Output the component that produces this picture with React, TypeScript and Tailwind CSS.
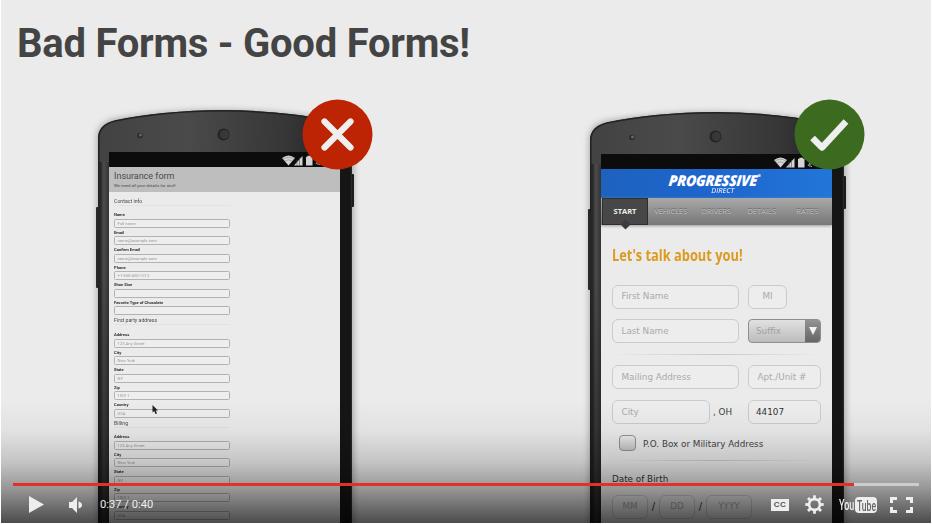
import React from "react";

type Tone = "left" | "right";

function PhoneShell({ id }: { id: Tone }) {
  return (
    <svg className="absolute left-0 top-0" width="272" height="440" viewBox="0 0 272 440" aria-hidden="true">
      <defs>
        <linearGradient id={id + "-body"} x1="0" y1="0" x2="1" y2="0.05">
          <stop offset="0" stopColor="#424242" />
          <stop offset="0.35" stopColor="#4a4a4a" />
          <stop offset="0.75" stopColor="#363636" />
          <stop offset="1" stopColor="#1c1c1c" />
        </linearGradient>
        <linearGradient id={id + "-side"} x1="0" y1="0" x2="1" y2="0">
          <stop offset="0" stopColor="#1d1d1d" />
          <stop offset="0.45" stopColor="#4c4c4c" />
          <stop offset="1" stopColor="#333" />
        </linearGradient>
        <linearGradient id={id + "-fade"} x1="0" y1="0" x2="0" y2="1">
          <stop offset="0" stopColor="#111" stopOpacity="0" />
          <stop offset="0.3" stopColor="#111" stopOpacity="0" />
          <stop offset="0.9" stopColor="#111" stopOpacity="0.9" />
        </linearGradient>
        <filter id={id + "-glow"} x="-10%" y="-10%" width="120%" height="120%">
          <feGaussianBlur stdDeviation="3.2" />
        </filter>
      </defs>
      <path d="M7 440V38Q7 23 24 19Q130 1 240 19Q264 23 264 38V440Z" fill="#777" opacity="0.55" filter={"url(#" + id + "-glow)"} />
      <rect x="6" y="107" width="4" height="81" rx="1" fill="#292929" />
      <rect x="260" y="74" width="4" height="33" rx="1" fill="#1c1c1c" />
      <path d="M8 440V38Q8 24.500 25 20.500Q72 10.500 133 10Q194 10.500 241 20.500Q262 24 262 38V440Z" fill={"url(#" + id + "-body)"} />
      <path d="M8.800 440V38Q9 25 25 21Q72 11.200 133 10.800Q194 11.200 241 21" fill="none" stroke="#222" strokeWidth="1.500" />
      <rect x="9.500" y="62" width="9.500" height="378" fill={"url(#" + id + "-side)"} />
      <rect x="250" y="52" width="12" height="388" fill="#151515" />
      <rect x="8" y="60" width="11" height="380" fill={"url(#" + id + "-fade)"} opacity="0.6" />
      <path d="M261.300 60V440" stroke="#2f2f2f" strokeWidth="1" />
      <circle cx="50" cy="35.500" r="2.800" fill="#2b2b2b" />
      <circle cx="50.500" cy="35" r="1.500" fill="#666" />
      <circle cx="133.500" cy="34.500" r="6" fill="#242424" />
      <circle cx="134.300" cy="34.500" r="4.500" fill="#383838" />
    </svg>
  );
}

function StatusIcons() {
  return (
    <svg width="42" height="11" viewBox="0 0 42 11" fill="#d4d4d4" aria-hidden="true">
      <path d="M0 3Q6.500 -2 13 3L6.500 10.500Z" />
      <path d="M1.200 4Q6.500 0.500 11.800 4M3 6Q6.500 3.500 10 6" fill="none" stroke="#777" strokeWidth="0.500" />
      <path d="M12 10.500L20.500 1V10.500Z" />
      <path d="M15 5V11M17.500 3V11" stroke="#555" strokeWidth="0.600" />
      <path d="M24 1.800H25.500V0.800H29V1.800H30.500V10.500H24Z" />
      <path d="M34 9L36 6V10M37.500 10V9" stroke="#aaa" fill="none" />
    </svg>
  );
}

function Phone({ id, className, children, badge }: { id: Tone; className: string; children: React.ReactNode; badge: React.ReactNode }) {
  return (
    <section className={"relative h-[440px] w-[272px] shrink-0 pl-[19px] pt-[52px] " + className}>
      <PhoneShell id={id} />
      <div className="relative h-[388px] w-[231px] overflow-hidden bg-[#ebebeb]">
        <div className="flex h-[15px] items-center bg-[#0c0c0c] pl-[173px] pt-px">
          <StatusIcons />
        </div>
        {children}
      </div>
      {badge}
    </section>
  );
}

const sections: { title: string; head: string; fields: [string, string][] }[] = [
  {
    title: "Contact info",
    head: "h-[18.200px] pt-[4.500px]",
    fields: [
      ["Name", "Full name"],
      ["Email", "name@example.com"],
      ["Confirm Email", "name@example.com"],
      ["Phone", "+1-650-450-1212"],
      ["Shoe Size", ""],
      ["Favorite Type of Chocolate", ""],
    ],
  },
  {
    title: "First party address",
    head: "h-[14.600px] pt-[1px]",
    fields: [
      ["Address", "123 Any Street"],
      ["City", "New York"],
      ["State", "NY"],
      ["Zip", "10011"],
      ["Country", "USA"],
    ],
  },
  {
    title: "Billing",
    head: "h-[14.600px] pt-[1px]",
    fields: [
      ["Address", "123 Any Street"],
      ["City", "New York"],
      ["State", "NY"],
      ["Zip", "10011"],
      ["Country", "USA"],
    ],
  },
];

function InsuranceForm() {
  return (
    <div className="font-[Roboto,sans-serif]">
      <header className="h-[25.300px] bg-[#bebebe] pl-[5px] pt-[3.500px] text-[#4a4a4a]">
        <h2 className="font-['Roboto',sans-serif] text-[9px] leading-[11px] tracking-[-0.020px]">Insurance form</h2>
        <p className="text-[4.300px] leading-[8px]">We need all your details for stuff</p>
      </header>
      <div className="w-[121px] pl-[5px] blur-[0.35px]">
        {sections.map((s) => (
          <div key={s.title}>
            <div className={s.head}>
              <h3 className="border-b border-[#e2e2e2] text-[5.200px] leading-[8px] text-[#4a4a4a]">{s.title}</h3>
            </div>
            {s.fields.map(([label, hint]) => (
              <div key={label} className="flex h-[17.500px] flex-col">
                <span className="h-[8.500px] whitespace-nowrap text-[4.100px] font-bold leading-[9.500px] text-[#303030]">{label}</span>
                <span className="h-[9px] rounded-[1.500px] border border-[#b2b2b2] bg-[#eeeeee] pl-[2.500px] text-[4.200px] leading-[7px] text-[#999]">{hint}</span>
              </div>
            ))}
          </div>
        ))}
      </div>
    </div>
  );
}

function Field({ className, children }: { className: string; children: React.ReactNode }) {
  return (
    <span className={"flex h-[24px] shrink-0 items-center rounded-[6px] border border-[#cbcbcb] bg-[#ededed] pt-px text-[#aaaaaa] " + className}>
      {children}
    </span>
  );
}

function Divider() {
  return <div className="h-px w-[208px] bg-linear-to-r from-transparent via-[#c8c8c8] to-transparent" />;
}

function ProgressiveForm() {
  return (
    <div className="font-['DejaVu_Sans',Verdana,sans-serif] text-[8.800px]">
      <header className="flex h-[29px] flex-col items-center bg-linear-to-r from-[#1d62bd] via-[#1e66cf] to-[#2276d8] pr-1 pt-[4px] text-white">
        <div className="flex scale-x-[0.94] -skew-x-6 items-start whitespace-nowrap font-['Open_Sans',sans-serif] text-[15px] font-extrabold italic leading-[15px] tracking-[-0.400px]">
          PROGRESSIVE<span className="text-[4px] leading-[5px]">®</span>
        </div>
        <div className="scale-x-[0.92] pl-[18px] font-['Open_Sans',sans-serif] text-[8px] italic leading-[4px]">DIRECT</div>
      </header>
      <nav className="flex h-[27px] items-stretch bg-linear-to-b from-[#a9a9a9] to-[#777] font-['Open_Sans',sans-serif] text-[7.500px] text-[#bebebe] shadow-[0_1px_3px_#999]">
        <div className="relative ml-px flex w-[46px] items-center justify-center border border-[#2e2e2e] bg-[#474747] font-bold text-[#eeeeee]">
          START
          <span className="absolute -bottom-[4px] left-[19px] size-[7px] rotate-45 bg-[#3b3b3b]" />
        </div>
        {["VEHICLES", "DRIVERS", "DETAILS", "RATES"].map((t) => (
          <span key={t} className="flex w-[45.500px] items-center justify-center [text-shadow:0_-1px_0_#696969]">{t}</span>
        ))}
      </nav>
      <div className="pl-[11px] pt-[19px]">
        <h2 className="h-[22px] w-[200px] origin-left scale-x-[0.802] whitespace-nowrap font-['Open_Sans',sans-serif] text-[16px] font-bold leading-[22px] text-[#dc9a20]">Let's talk about you!</h2>
        <div className="mt-[18.500px] flex gap-[9px]">
          <Field className="w-[127px] pl-[8.500px]">First Name</Field>
          <Field className="w-[39px] justify-center">MI</Field>
        </div>
        <div className="mt-[10.500px] flex gap-[9px]">
          <Field className="w-[127px] pl-[8.500px]">Last Name</Field>
          <span className="flex h-[24px] w-[73px] items-center overflow-hidden rounded-[4px] border border-[#8e8e8e] bg-linear-to-b from-[#e1e1e1] to-[#bcbcbc] text-[#a0a0a0]">
            <span className="grow pl-[7px] pt-px">Suffix</span>
            <span className="flex h-full w-[15px] items-center justify-center bg-linear-to-b from-[#929292] to-[#666]">
              <svg width="8" height="8" viewBox="0 0 8 8" aria-hidden="true"><path d="M0 0H8L4 8Z" fill="#f2f2f2" /></svg>
            </span>
          </span>
        </div>
        <div className="pt-[10.500px]"><Divider /></div>
        <div className="mt-[10.500px] flex gap-[9px]">
          <Field className="w-[127px] pl-[8.500px]">Mailing Address</Field>
          <Field className="w-[73px] pl-[8.500px]">Apt./Unit #</Field>
        </div>
        <div className="mt-[11px] flex items-center">
          <Field className="w-[98px] pl-[8.500px]">City</Field>
          <span className="w-[38px] pl-[3px] pt-px text-[#3f3f3f]">, OH</span>
          <Field className="w-[73px] pl-[7px]"><span className="text-[#333]">44107</span></Field>
        </div>
        <div className="mt-[11px] flex h-[16px] items-center gap-[7px] pl-[7px] text-[#444]">
          <span className="h-[16px] w-[17px] rounded-[4px] border border-[#929292] bg-linear-to-b from-[#ededed] to-[#c6c6c6]" />
          <span className="whitespace-nowrap pt-[3px]">P.O. Box or Military Address</span>
        </div>
        <div className="pt-[9px]"><Divider /></div>
        <p className="mt-[11px] h-[14px] leading-[14px] text-[#333]">Date of Birth</p>
        <div className="mt-[8.500px] flex items-center text-[#333]">
          <Field className="w-[36px] justify-center">MM</Field>
          <span className="w-[11px] text-center text-[10px]">/</span>
          <Field className="w-[36px] justify-center">DD</Field>
          <span className="w-[11px] text-center text-[10px]">/</span>
          <Field className="w-[46px] justify-center">YYYY</Field>
        </div>
      </div>
    </div>
  );
}

function Controls() {
  return (
    <footer className="absolute inset-x-0 bottom-0 flex h-[123px] flex-col justify-end bg-[linear-gradient(to_bottom,rgba(0,0,0,0)_0%,rgba(0,0,0,0.04)_25%,rgba(0,0,0,0.16)_50%,rgba(0,0,0,0.36)_72%,rgba(0,0,0,0.68)_100%)] px-3 text-[#eeeeee]">
      <div className="h-[3px] w-[906px] bg-[#cccccc]">
        <div className="h-full w-[841px] bg-[#e0322b]" />
      </div>
      <div className="flex h-[37px] items-center pl-4 pr-[6px]">
        <svg width="15" height="17" viewBox="0 0 15 17" fill="currentColor" aria-label="Play"><path d="M0 0L15 8.500L0 17Z" /></svg>
        <svg className="ml-[24.500px]" width="14" height="16" viewBox="0 0 14 16" fill="currentColor" aria-label="Volume"><path d="M0 5H3L8 0V16L3 11H0ZM9.500 4.500Q13 5.500 13 8T9.500 11.500Z" /></svg>
        <span className="ml-[17.500px] w-[60px] whitespace-nowrap pt-px font-[Roboto,sans-serif] text-[11.200px]">0:37 / 0:40</span>
        <span className="ml-auto flex h-[12px] w-[18px] items-center justify-center bg-[#eeeeee] font-['Liberation_Sans',sans-serif] text-[8px] font-bold tracking-[0.500px] text-[#555]">CC</span>
        <svg className="ml-[16px]" width="19" height="19" viewBox="-9.500 -9.500 19 19" aria-label="Settings">
          <g fill="none" stroke="#eee">
            {[0, 45, 90, 135, 180, 225, 270, 315].map((a) => <path key={a} d="M0 -5V-9.200" strokeWidth="2.800" transform={`rotate(${a})`} />)}
            <circle r="5.400" strokeWidth="2.600" />
          </g>
        </svg>
        <div className="ml-[15px] flex w-[38px] items-center font-['Roboto',sans-serif]">
          <span className="h-[18px] w-[16px] shrink-0 leading-[18px]"><span className="inline-block origin-left scale-x-[0.600] whitespace-nowrap text-[15px] font-medium">You</span></span>
          <span className="h-[16px] w-[22px] shrink-0 rounded-[4px] bg-[#eeeeee] pl-[2px] leading-[17px] text-[#666]"><span className="inline-block origin-left scale-x-[0.570] text-[15px] font-medium">Tube</span></span>
        </div>
        <svg className="ml-[13px]" width="23" height="16" viewBox="0 0 23 16" fill="none" stroke="currentColor" strokeWidth="3" aria-label="Full screen"><path d="M1.500 6V1.500H7M16 1.500H21.500V6M21.500 10V14.500H16M7 14.500H1.500V10" /></svg>
      </div>
    </footer>
  );
}

export default function App() {
  return (
    <div className="h-[524px] w-[932px] bg-white pl-px">
      <main className="relative flex h-[523px] w-[930px] flex-col overflow-hidden bg-[#ebebeb]">
        <h1 className="h-[100px] shrink-0 whitespace-nowrap pl-[16px] pt-[20px] font-[Roboto,sans-serif] text-[40px] font-bold leading-[48px] tracking-[-0.250px] text-[#444]">Bad Forms - Good Forms!</h1>
        <div className="flex gap-[220px] pl-[89px]">
          <Phone
            id="left"
            className=""
            badge={
              <svg className="absolute left-[212px] top-[-1px]" width="71" height="71" viewBox="0 0 71 71" aria-label="Bad">
                <circle cx="35.500" cy="35.500" r="35" fill="#bd2404" />
                <path d="M22.500 22.500L48.500 48.500M48.500 22.500L22.500 48.500" stroke="#efefef" strokeWidth="6.200" strokeLinecap="round" />
              </svg>
            }
          >
            <InsuranceForm />
          </Phone>
          <Phone
            id="right"
            className="top-[2px]"
            badge={
              <svg className="absolute left-[212px] top-[-3px]" width="71" height="71" viewBox="0 0 71 71" aria-label="Good">
                <circle cx="35.500" cy="35.500" r="35" fill="#3c6a1e" />
                <path d="M18.500 39L28 48.500L52 22.500" fill="none" stroke="#efefef" strokeWidth="6.500" strokeLinecap="butt" strokeLinejoin="round" />
              </svg>
            }
          >
            <ProgressiveForm />
          </Phone>
        </div>
        <svg className="absolute left-[151px] top-[405px]" width="7" height="10" viewBox="0 0 7 10" aria-hidden="true"><path d="M0.500 0V7.500L2.200 6L3.500 9L5 8.500L3.800 5.500H6Z" fill="#222" /></svg>
        <Controls />
      </main>
    </div>
  );
}
